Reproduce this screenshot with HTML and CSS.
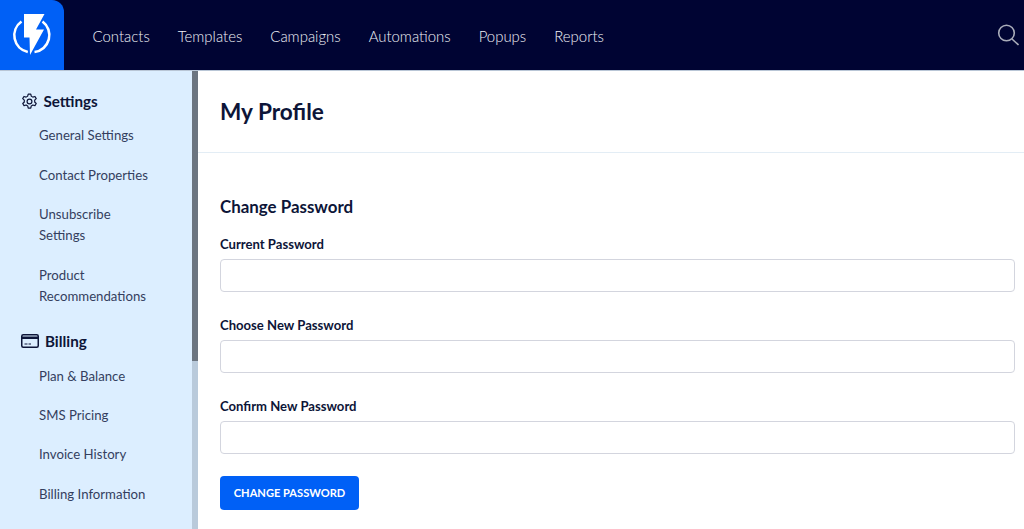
FILE: index.html
```html
<!DOCTYPE html>
<html lang="en">
<head>
<meta charset="utf-8">
<title>My Profile</title>
<link rel="stylesheet" href="styles.css">
</head>
<body>
<header class="topbar">
  <a class="logo" href="#">
    <svg class="logo-icon" width="64" height="70" viewBox="0 0 64 70">
      <path class="logo-ring" d="M21.5 21.5A17 17 0 0 0 27.8 52M34.5 52A17 17 0 0 0 42.5 21.5"/>
      <path class="logo-bolt" d="M24 14H44.5L36 29.5H44L30 55L29.5 37.5H24Z"/>
    </svg>
  </a>
  <nav class="mainnav">
    <a href="#">Contacts</a>
    <a href="#">Templates</a>
    <a href="#">Campaigns</a>
    <a href="#">Automations</a>
    <a href="#">Popups</a>
    <a href="#">Reports</a>
  </nav>
  <svg class="search" width="22" height="24" viewBox="0 0 22 24">
    <circle cx="9.5" cy="10" r="7.8"/>
    <path d="M15 16L21.5 22"/>
  </svg>
</header>
<div class="body">
  <aside class="sidebar">
    <div class="sidebar-inner">
      <h3 class="side-title">
        <svg class="side-icon-gear" width="17" height="17" viewBox="0 0 24 24">
          <circle cx="12" cy="12" r="3.4"/>
          <path d="M10.2 1.5h3.6l.7 3a8 8 0 0 1 2.2 1.3l3-.9 1.8 3.1-2.2 2.1a8 8 0 0 1 0 2.6l2.2 2.1-1.8 3.1-3-.9a8 8 0 0 1-2.2 1.3l-.7 3h-3.6l-.7-3a8 8 0 0 1-2.2-1.3l-3 .9-1.8-3.1 2.2-2.1a8 8 0 0 1 0-2.6L2.4 8l1.8-3.1 3 .9a8 8 0 0 1 2.2-1.3z"/>
        </svg>
        Settings
      </h3>
      <ul class="side-list">
        <li><a href="#">General Settings</a></li>
        <li><a href="#">Contact Properties</a></li>
        <li><a href="#">Unsubscribe<br>Settings</a></li>
        <li><a href="#">Product<br>Recommendations</a></li>
      </ul>
      <h3 class="side-title billing">
        <svg class="side-icon-card" width="18" height="14" viewBox="0 0 18 14">
          <rect class="card-outline" x="0.75" y="0.75" width="16.5" height="12.5" rx="1.5"/>
          <rect class="card-band" x="0.75" y="2.5" width="16.5" height="2.5"/>
          <path class="card-line" d="M3.5 10H6.5M7.5 10H10"/>
        </svg>
        Billing
      </h3>
      <ul class="side-list">
        <li><a href="#">Plan &amp; Balance</a></li>
        <li><a href="#">SMS Pricing</a></li>
        <li><a href="#">Invoice History</a></li>
        <li><a href="#">Billing Information</a></li>
      </ul>
    </div>
    <div class="scrolltrack"><div class="scrollthumb"></div></div>
  </aside>
  <main class="content">
    <div class="page-head"><h1>My Profile</h1></div>
    <form class="form">
      <h2>Change Password</h2>
      <label class="field"><span>Current Password</span><input type="password"></label>
      <label class="field"><span>Choose New Password</span><input type="password"></label>
      <label class="field"><span>Confirm New Password</span><input type="password"></label>
      <button type="button" class="btn">CHANGE PASSWORD</button>
    </form>
  </main>
</div>
</body>
</html>
```
FILE: styles.css
```css
* { box-sizing: border-box; }
html, body { margin: 0; height: 100%; overflow: hidden; }
body { font-family: Lato, "Liberation Sans", sans-serif; color: #0b1436; background: #fff; }
a { text-decoration: none; color: inherit; }

.topbar { height: 71px; background: #000433; display: flex; align-items: stretch; border-bottom: 1px solid #b9c6d6; }
.logo { width: 64px; background: #0060f6; border-top-right-radius: 12px; display: block; overflow: hidden; }
.logo-icon { display: block; }
.logo-ring { fill: none; stroke: #fff; stroke-width: 2.6; }
.logo-bolt { fill: #fff; }
.mainnav { display: flex; align-items: center; gap: 28px; margin-left: 28.5px; font-size: 14.95px; font-weight: 300; color: #f0f2f7; padding-top: 2px; }
.search { margin: 23px 5px 0 auto; fill: none; stroke: #a9adba; stroke-width: 1.6; }

.body { display: flex; height: 458px; }
.sidebar { width: 198px; background: #dceeff; display: flex; flex: none; }
.sidebar-inner { flex: 1; padding: 20px 0 0 21px; }
.scrolltrack { width: 6px; background: #b9cadb; }
.scrollthumb { height: 290px; background: #6c7580; }
.side-title { margin: 0; display: flex; align-items: center; gap: 6px; font-size: 15.2px; font-weight: 700; line-height: 20px; color: #0d1538; }
.side-title.billing { margin-top: 15.6px; }
.side-icon-gear { fill: none; stroke: #0d1538; stroke-width: 1.7; stroke-linejoin: round; flex: none; margin-left: -0.5px; }
.side-icon-card { flex: none; }
.card-outline { fill: none; stroke: #0d1538; stroke-width: 1.5; }
.card-band { fill: #0d1538; }
.card-line { stroke: #0d1538; stroke-width: 1; }
.side-list { list-style: none; margin: 0; padding: 0 0 0 18px; font-size: 13.2px; line-height: 21px; color: #343e5e; }
.side-list li { padding: 9.2px 0; }
.side-list li:first-child { padding-top: 14.4px; }

.content { flex: 1; min-width: 0; }
.page-head { height: 82px; border-bottom: 1px solid #e3edf5; padding: 24px 22px 0; }
.page-head h1 { margin: 0; font-size: 22.6px; line-height: 33px; font-weight: 700; color: #0d1538; }
.form { padding: 42px 9px 0 22px; }
.form h2 { margin: 0; font-size: 16.9px; line-height: 24px; font-weight: 700; color: #0d1538; }
.field { display: block; }
.field + .field { margin-top: 23.6px; }
.form h2 + .field { margin-top: 15.4px; }
.field span { display: block; font-size: 13.1px; line-height: 20px; font-weight: 700; color: #0d1538; margin-bottom: 4.4px; }
.field input { display: block; width: 100%; height: 33px; border: 1px solid #d3d5de; border-radius: 4px; background: #fff; }
.btn { display: block; margin-top: 22px; width: 139px; height: 34px; padding: 0; border: 0; border-radius: 4px; background: #0060f6; color: #fff; font: 700 11.1px Lato, sans-serif; }
```
